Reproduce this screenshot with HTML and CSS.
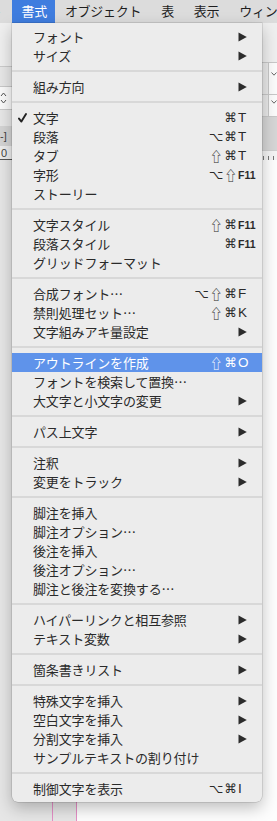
FILE: index.html
```html
<!DOCTYPE html>
<html lang="ja">
<head>
<meta charset="utf-8">
<title>書式メニュー</title>
<link rel="stylesheet" href="styles.css">
</head>
<body>
<div class="screen">
  <div class="menubar">
    <span class="mb-item mb-prev">レイアウト</span>
    <span class="mb-item mb-active">書式</span>
    <span class="mb-item">オブジェクト</span>
    <span class="mb-item">表</span>
    <span class="mb-item">表示</span>
    <span class="mb-item">ウィンドウ</span>
  </div>

  <div class="app">
    <div class="toolbar">
      <div class="tb-left">
        <div class="st l1"></div>
        <div class="st l2"></div>
        <div class="st l3">
          <svg class="stepper" width="7" height="16" viewBox="0 0 7 16"><path d="M1 6 L3.5 3 L6 6 M1 10 L3.5 13 L6 10" fill="none" stroke="#555" stroke-width="1"/></svg>
        </div>
        <div class="st l4"></div>
        <div class="st l5"><span class="tb-text">-]</span></div>
        <div class="st l6"><span class="tb-text zero">0</span></div>
      </div>
      <div class="tb-mid"></div>
      <div class="tb-right">
        <div class="st r1"></div>
        <div class="st r2"><span class="field"><svg width="6" height="4" viewBox="0 0 6 4"><path d="M0.5 0.5 L3 3.2 L5.5 0.5" fill="none" stroke="#666" stroke-width="1"/></svg></span></div>
        <div class="st r3"><span class="field"><svg width="6" height="4" viewBox="0 0 6 4"><path d="M0.5 0.5 L3 3.2 L5.5 0.5" fill="none" stroke="#666" stroke-width="1"/></svg></span></div>
        <div class="st r4"></div>
        <div class="st r5"><span class="tick"></span><span class="tick"></span><span class="tick"></span></div>
      </div>
    </div>
    <div class="canvas">
      <div class="pasteboard"><span class="guide"></span></div>
      <div class="page"></div>
    </div>
  </div>

  <div class="menu">
    <div class="mi"><span class="chk"></span><span class="lbl">フォント</span><span class="mods"></span><span class="key"><svg class="arrow" width="9" height="10" viewBox="0 0 9 10"><polygon points="0.5,0.5 8.8,5 0.5,9.5"/></svg></span></div>
    <div class="mi"><span class="chk"></span><span class="lbl">サイズ</span><span class="mods"></span><span class="key"><svg class="arrow" width="9" height="10" viewBox="0 0 9 10"><polygon points="0.5,0.5 8.8,5 0.5,9.5"/></svg></span></div>
    <div class="sep"></div>
    <div class="mi"><span class="chk"></span><span class="lbl">組み方向</span><span class="mods"></span><span class="key"><svg class="arrow" width="9" height="10" viewBox="0 0 9 10"><polygon points="0.5,0.5 8.8,5 0.5,9.5"/></svg></span></div>
    <div class="sep"></div>
    <div class="mi"><span class="chk"><svg width="9" height="10" viewBox="0 0 9 10"><path d="M1 5.6 L3.4 8.6 L8 1" fill="none" stroke="#222" stroke-width="1.9" stroke-linecap="round" stroke-linejoin="round"/></svg></span><span class="lbl">文字</span><span class="mods"><span>⌘</span></span><span class="key">T</span></div>
    <div class="mi"><span class="chk"></span><span class="lbl">段落</span><span class="mods"><span>⌥</span><span>⌘</span></span><span class="key">T</span></div>
    <div class="mi"><span class="chk"></span><span class="lbl">タブ</span><span class="mods"><span class="sh">⇧</span><span>⌘</span></span><span class="key">T</span></div>
    <div class="mi"><span class="chk"></span><span class="lbl">字形</span><span class="mods"><span>⌥</span><span class="sh">⇧</span></span><span class="key fkey">F11</span></div>
    <div class="mi"><span class="chk"></span><span class="lbl">ストーリー</span><span class="mods"></span><span class="key"></span></div>
    <div class="sep"></div>
    <div class="mi"><span class="chk"></span><span class="lbl">文字スタイル</span><span class="mods"><span class="sh">⇧</span><span>⌘</span></span><span class="key fkey">F11</span></div>
    <div class="mi"><span class="chk"></span><span class="lbl">段落スタイル</span><span class="mods"><span>⌘</span></span><span class="key fkey">F11</span></div>
    <div class="mi"><span class="chk"></span><span class="lbl">グリッドフォーマット</span><span class="mods"></span><span class="key"></span></div>
    <div class="sep"></div>
    <div class="mi"><span class="chk"></span><span class="lbl">合成フォント…</span><span class="mods"><span>⌥</span><span class="sh">⇧</span><span>⌘</span></span><span class="key">F</span></div>
    <div class="mi"><span class="chk"></span><span class="lbl">禁則処理セット…</span><span class="mods"><span class="sh">⇧</span><span>⌘</span></span><span class="key">K</span></div>
    <div class="mi"><span class="chk"></span><span class="lbl">文字組みアキ量設定</span><span class="mods"></span><span class="key"><svg class="arrow" width="9" height="10" viewBox="0 0 9 10"><polygon points="0.5,0.5 8.8,5 0.5,9.5"/></svg></span></div>
    <div class="sep"></div>
    <div class="mi hl"><span class="chk"></span><span class="lbl">アウトラインを作成</span><span class="mods"><span class="sh">⇧</span><span>⌘</span></span><span class="key">O</span></div>
    <div class="mi"><span class="chk"></span><span class="lbl">フォントを検索して置換…</span><span class="mods"></span><span class="key"></span></div>
    <div class="mi"><span class="chk"></span><span class="lbl">大文字と小文字の変更</span><span class="mods"></span><span class="key"><svg class="arrow" width="9" height="10" viewBox="0 0 9 10"><polygon points="0.5,0.5 8.8,5 0.5,9.5"/></svg></span></div>
    <div class="sep"></div>
    <div class="mi"><span class="chk"></span><span class="lbl">パス上文字</span><span class="mods"></span><span class="key"><svg class="arrow" width="9" height="10" viewBox="0 0 9 10"><polygon points="0.5,0.5 8.8,5 0.5,9.5"/></svg></span></div>
    <div class="sep"></div>
    <div class="mi"><span class="chk"></span><span class="lbl">注釈</span><span class="mods"></span><span class="key"><svg class="arrow" width="9" height="10" viewBox="0 0 9 10"><polygon points="0.5,0.5 8.8,5 0.5,9.5"/></svg></span></div>
    <div class="mi"><span class="chk"></span><span class="lbl">変更をトラック</span><span class="mods"></span><span class="key"><svg class="arrow" width="9" height="10" viewBox="0 0 9 10"><polygon points="0.5,0.5 8.8,5 0.5,9.5"/></svg></span></div>
    <div class="sep"></div>
    <div class="mi"><span class="chk"></span><span class="lbl">脚注を挿入</span><span class="mods"></span><span class="key"></span></div>
    <div class="mi"><span class="chk"></span><span class="lbl">脚注オプション…</span><span class="mods"></span><span class="key"></span></div>
    <div class="mi"><span class="chk"></span><span class="lbl">後注を挿入</span><span class="mods"></span><span class="key"></span></div>
    <div class="mi"><span class="chk"></span><span class="lbl">後注オプション…</span><span class="mods"></span><span class="key"></span></div>
    <div class="mi"><span class="chk"></span><span class="lbl">脚注と後注を変換する…</span><span class="mods"></span><span class="key"></span></div>
    <div class="sep"></div>
    <div class="mi"><span class="chk"></span><span class="lbl">ハイパーリンクと相互参照</span><span class="mods"></span><span class="key"><svg class="arrow" width="9" height="10" viewBox="0 0 9 10"><polygon points="0.5,0.5 8.8,5 0.5,9.5"/></svg></span></div>
    <div class="mi"><span class="chk"></span><span class="lbl">テキスト変数</span><span class="mods"></span><span class="key"><svg class="arrow" width="9" height="10" viewBox="0 0 9 10"><polygon points="0.5,0.5 8.8,5 0.5,9.5"/></svg></span></div>
    <div class="sep"></div>
    <div class="mi"><span class="chk"></span><span class="lbl">箇条書きリスト</span><span class="mods"></span><span class="key"><svg class="arrow" width="9" height="10" viewBox="0 0 9 10"><polygon points="0.5,0.5 8.8,5 0.5,9.5"/></svg></span></div>
    <div class="sep"></div>
    <div class="mi"><span class="chk"></span><span class="lbl">特殊文字を挿入</span><span class="mods"></span><span class="key"><svg class="arrow" width="9" height="10" viewBox="0 0 9 10"><polygon points="0.5,0.5 8.8,5 0.5,9.5"/></svg></span></div>
    <div class="mi"><span class="chk"></span><span class="lbl">空白文字を挿入</span><span class="mods"></span><span class="key"><svg class="arrow" width="9" height="10" viewBox="0 0 9 10"><polygon points="0.5,0.5 8.8,5 0.5,9.5"/></svg></span></div>
    <div class="mi"><span class="chk"></span><span class="lbl">分割文字を挿入</span><span class="mods"></span><span class="key"><svg class="arrow" width="9" height="10" viewBox="0 0 9 10"><polygon points="0.5,0.5 8.8,5 0.5,9.5"/></svg></span></div>
    <div class="mi"><span class="chk"></span><span class="lbl">サンプルテキストの割り付け</span><span class="mods"></span><span class="key"></span></div>
    <div class="sep"></div>
    <div class="mi"><span class="chk"></span><span class="lbl">制御文字を表示</span><span class="mods"><span>⌥</span><span>⌘</span></span><span class="key">I</span></div>
  </div>
</div>
</body>
</html>
```

FILE: styles.css
```css
* { box-sizing: border-box; margin: 0; padding: 0; }
html, body { width: 277px; height: 821px; overflow: hidden; }
body { font-family: "Noto Sans CJK JP", "Noto Sans", sans-serif; background: #fff; }

.screen { position: relative; width: 277px; height: 821px; overflow: hidden; display: flex; flex-direction: column; }

/* menu bar */
.menubar { height: 23px; flex: none; display: flex; background: #dcdcdc; font-size: 13px; color: #1e1e1e; white-space: nowrap; letter-spacing: -0.3px; }
.mb-item { flex: none; padding: 0 10px 0 10px; line-height: 22px; }
.mb-prev { margin-left: -72px; }
.mb-active { background: #3f7ddf; color: #fff; padding: 0 8px 0 10px; }

/* app behind */
.app { flex: 1; display: flex; flex-direction: column; }
.toolbar { height: 137px; flex: none; display: flex; }
.tb-left { width: 12px; display: flex; flex-direction: column; }
.tb-mid { flex: 1; background: #e9e9e9; }
.tb-right { width: 15px; display: flex; flex-direction: column; }
.st { flex: none; position: relative; overflow: hidden; }
.l1 { height: 44px; background: #efefef; border-bottom: 1px solid #cbcbcb; }
.l2 { height: 19px; background: #e7e7e7; }
.l3 { height: 24px; background: #fafafa; border-top: 1px solid #c8c8c8; border-bottom: 1px solid #c8c8c8; display: flex; align-items: center; }
.l4 { height: 16px; background: #e7e7e7; }
.l5 { height: 20px; background: #d4d4d4; display: flex; align-items: center; }
.l6 { height: 14px; background: #ededed; border-bottom: 1px solid #555; display: flex; align-items: flex-end; }
.tb-text { font-family: "Liberation Sans", sans-serif; font-size: 11px; color: #444; line-height: 12px; white-space: nowrap; }
.zero { margin-left: 1px; }

.r1 { height: 40px; background: #efefef; border-bottom: 1px solid #c8c8c8; }
.r2 { height: 32px; background: #e9e9e9; border-bottom: 1px solid #c8c8c8; display: flex; justify-content: flex-end; }
.r3 { height: 22px; background: #e9e9e9; border-bottom: 1px solid #c8c8c8; display: flex; justify-content: flex-end; }
.field { width: 9px; background: #fbfbfb; border-left: 1px solid #c8c8c8; display: flex; justify-content: flex-end; align-items: flex-start; padding-top: 9px; }
.r3 .field { padding-top: 5px; }
.r4 { height: 33px; background: #d6d6d6; }
.r5 { height: 10px; background: #f4f4f4; border-top: 1px solid #cfcfcf; display: flex; align-items: flex-end; gap: 4px; padding-left: 1px; }
.tick { width: 1px; height: 4px; background: #777; }

.canvas { flex: 1; display: flex; }
.pasteboard { width: 77px; background: #e6e6e6; border-right: 1px solid #e48fc6; display: flex; justify-content: flex-end; padding-right: 23px; }
.guide { width: 1px; background: #e48fc6; }
.page { flex: 1; background: #fdfdfd; }

/* the dropdown menu */
.menu { position: absolute; left: 12px; top: 23px; width: 250px; padding: 4px 0; background: #ececec; border-radius: 0 0 6px 6px; box-shadow: 0 0 0 0.5px rgba(0, 0, 0, 0.2), 0 6px 16px rgba(0, 0, 0, 0.25); font-size: 13px; color: #2a2a2a; letter-spacing: -0.15px; z-index: 2; }
.mi { display: grid; grid-template-columns: 21px 1fr auto 24px; height: 19px; line-height: 18px; align-items: center; white-space: nowrap; }
.mi.hl { background: #5f93ea; color: #fff; }
.chk { display: flex; align-items: center; padding-left: 6px; height: 19px; }
.lbl { overflow: hidden; }
.mods { display: flex; align-items: center; height: 19px; font-family: "DejaVu Sans", sans-serif; font-size: 12.5px; letter-spacing: 0; }
.mods span { width: 14.5px; text-align: center; line-height: 19px; }
.mods .sh { font-family: "Noto Sans CJK JP", "DejaVu Sans", sans-serif; font-size: 13px; }
.key { font-family: "Liberation Sans", sans-serif; font-size: 13.5px; letter-spacing: 0; display: flex; align-items: center; height: 19px; }
.fkey { font-size: 10.5px; font-weight: bold; padding-top: 1px; }
.arrow { fill: #2c2c2c; }
.sep { height: 2px; margin: 5px 0; background: #d8d8d8; }
```
